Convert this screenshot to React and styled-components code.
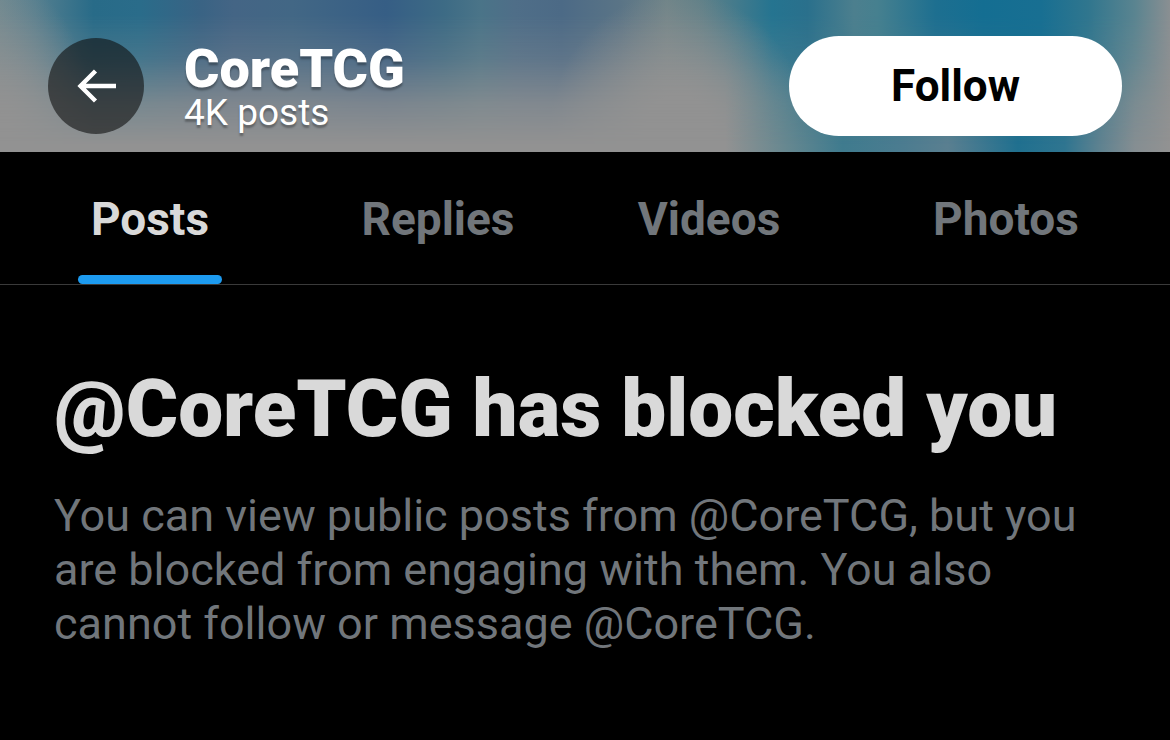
import React, { useState } from 'react';
import styled, { createGlobalStyle } from 'styled-components';

const GlobalStyle = createGlobalStyle`
  * {
    box-sizing: border-box;
  }

  body {
    margin: 0;
    background: #000;
    color: #d9d9d9;
    font-family: Roboto, 'Liberation Sans', sans-serif;
  }

  button {
    border: none;
    padding: 0;
    font-family: inherit;
    cursor: pointer;
  }
`;

const Page = styled.div`
  min-height: 100vh;
  background: #000;
`;

/* Blurred cover photo: the lower colours sit on the header,
   the upper ones fade out over them */
const Header = styled.header`
  position: relative;
  isolation: isolate;
  display: flex;
  align-items: center;
  gap: 40px;
  height: 152px;
  padding: 20px 48px 0;
  background: linear-gradient(
    90deg,
    #929292 62%,
    #688890 67%,
    #3f7b8e 72%,
    #4b7c90 77%,
    #5a7f90 81%,
    #20708f 87%,
    #2f7590 91%,
    #5e8290 94%,
    #858e92 97%,
    #929292 100%
  );

  &::before {
    content: '';
    position: absolute;
    inset: 0;
    z-index: -1;
    background:
      radial-gradient(ellipse 11% 90% at 58% 85%, #929292 25%, transparent),
      radial-gradient(ellipse 8% 100% at 0% 85%, #929292 10%, transparent),
      linear-gradient(
        90deg,
        #6c8890 0%,
        #557f8f 3%,
        #286b88 8%,
        #2a6c8a 12%,
        #396384 17%,
        #446585 20%,
        #426785 25%,
        #365e85 33%,
        #3d6b85 38%,
        #4a7488 41%,
        #4f6e88 44%,
        #4c6a86 48%,
        #5a7486 53%,
        #6f8488 57%,
        #5f8088 60%,
        #257490 66%,
        #2a708c 69%,
        #4c7f8e 73%,
        #46808f 75%,
        #1d6f90 80%,
        #146e92 84%,
        #186f92 89%,
        #30768e 93%,
        #5a8490 97%,
        #8a8f92 100%
      );
    mask-image: linear-gradient(180deg, #000 10%, rgba(0, 0, 0, 0.75) 38%, rgba(0, 0, 0, 0.25) 68%, transparent 95%);
  }
`;

const BackButton = styled.button`
  display: grid;
  place-items: center;
  flex-shrink: 0;
  width: 96px;
  height: 96px;
  border-radius: 50%;
  background: rgba(15, 15, 15, 0.6);
  color: #fff;
`;

const Profile = styled.div`
  flex: 1;
  padding-top: 6px;
  color: #fff;
  text-shadow: 0 3px 2px rgba(0, 0, 0, 0.3);
`;

const Name = styled.h1`
  margin: 0;
  font-size: 54px;
  font-weight: 900;
  line-height: 48px;
`;

const PostCount = styled.p`
  margin: 0;
  font-size: 37px;
  font-weight: 400;
  line-height: 40px;
`;

const FollowButton = styled.button`
  flex-shrink: 0;
  width: 333px;
  height: 100px;
  border-radius: 50px;
  background: #fff;
  color: #000;
  font-size: 44px;
  font-weight: 700;
`;

const Tabs = styled.nav`
  display: grid;
  grid-template-columns: 300fr 276fr 266fr 328fr;
  height: 133px;
  border-bottom: 1px solid #3a3a3a;
`;

const Tab = styled.button`
  display: flex;
  flex-direction: column;
  align-items: center;
  padding-top: 11px;
  background: none;
  color: ${({ $active }) => ($active ? '#d9d9d9' : '#71767b')};
  font-size: 46px;
  font-weight: 700;
  line-height: 112px;

  &::after {
    content: '';
    width: 144px;
    height: 9px;
    border-radius: 5px;
    background: ${({ $active }) => ($active ? '#1d9bf0' : 'transparent')};
  }
`;

const Notice = styled.main`
  padding: 78px 54px;
`;

const NoticeTitle = styled.h2`
  margin: 0 0 34px;
  font-size: 80px;
  font-weight: 900;
  line-height: 92px;
`;

const NoticeText = styled.p`
  margin: 0;
  color: #71767b;
  font-size: 45px;
  line-height: 54px;
`;

const tabs = ['Posts', 'Replies', 'Videos', 'Photos'];

const ArrowLeft = () => (
  <svg width="40" height="34" viewBox="0 0 40 34" fill="none" aria-hidden="true">
    <path d="M40 17H4M19.500 2L4.500 17L19.500 32" stroke="currentColor" strokeWidth="4.400" />
  </svg>
);

const App = () => {
  const [activeTab, setActiveTab] = useState('Posts');

  return (
    <Page>
      <GlobalStyle />
      <Header>
        <BackButton aria-label="Back">
          <ArrowLeft />
        </BackButton>
        <Profile>
          <Name>CoreTCG</Name>
          <PostCount>4K posts</PostCount>
        </Profile>
        <FollowButton>Follow</FollowButton>
      </Header>

      <Tabs>
        {tabs.map((tab) => (
          <Tab key={tab} $active={tab === activeTab} onClick={() => setActiveTab(tab)}>
            {tab}
          </Tab>
        ))}
      </Tabs>

      <Notice>
        <NoticeTitle>@CoreTCG has blocked you</NoticeTitle>
        <NoticeText>
          You can view public posts from @CoreTCG, but you are blocked from engaging with them. You
          also cannot follow or message @CoreTCG.
        </NoticeText>
      </Notice>
    </Page>
  );
};

export default App;
